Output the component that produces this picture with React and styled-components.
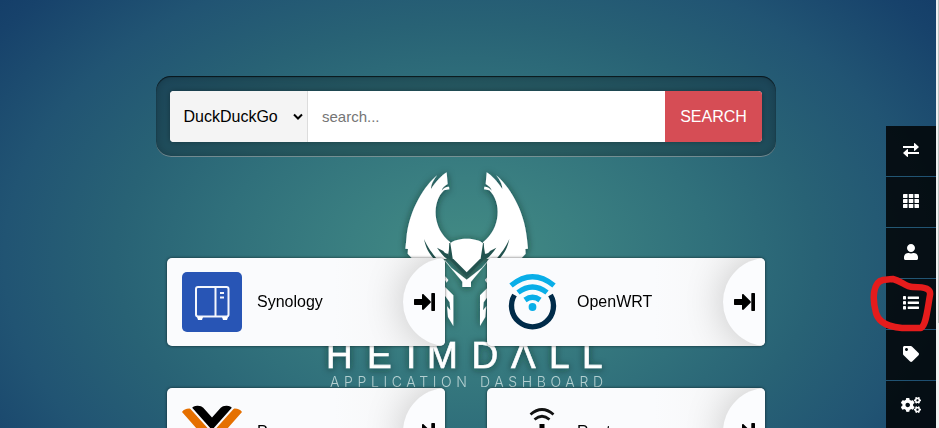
import React from "react";
import styled, { createGlobalStyle } from "styled-components";
import { FaUser, FaTag, FaCogs } from "react-icons/fa";

const Global = createGlobalStyle`
  *{box-sizing:border-box}
  body{margin:0;overflow:hidden;font-family:"Liberation Sans",Arial,sans-serif;font-size:16px;color:#000}
`;
const Page = styled.div`
  width:939px;height:428px;overflow:hidden;display:grid;grid-template-columns:936px 3px;
  background:radial-gradient(700px 470px at 466px 258px,#438c84 0,#3a7f81 17%,#30707b 35%,#286275 50%,#215473 66%,#17426b 82%,#113865 95%);
`;
const Stage = styled.div`display:grid;grid-template:428px / 936px;& > *{grid-area:1/1}`;
const Backdrop = styled.svg`width:936px;height:428px;`;
const Main = styled.main`display:flex;flex-direction:column;align-items:center;padding:76px 4px 0 0;height:428px;overflow:hidden;z-index:1`;
const SearchBox = styled.form`
  display:flex;width:620px;height:81px;flex:none;padding:15px 14px;border-radius:15px;
  background:rgba(0,0,0,.23);border:0;
  box-shadow:inset 0 1px 1px rgba(0,0,0,.7),inset 0 0 8px rgba(0,0,0,.22),inset 0 -1px 0 rgba(255,255,255,.42);
`;
const SearchBar = styled.div`display:flex;width:592px;height:51px;border-radius:4px;overflow:hidden;background:#fff;box-shadow:0 0 5px rgba(0,0,0,.3)`;
const Provider = styled.div`display:flex;align-items:center;justify-content:space-between;width:138px;padding:0 4px 0 13.5px;background:#f4f4f4;border-right:1px solid #dcdcdc`;
const Query = styled.input`flex:1;min-width:0;border:0;outline:0;padding:0 14px 1px;font:15px "Liberation Sans",Arial,sans-serif;&::placeholder{color:#757575}`;
const Submit = styled.button`width:97px;border:0;background:#d64d55;color:#fff;font:16px "Liberation Sans",Arial,sans-serif;padding:0`;
const Tiles = styled.section`display:grid;grid-template-columns:278px 278px;gap:42px;margin-top:101px`;
const Tile = styled.article`
  display:flex;align-items:center;height:88px;padding-left:15px;border-radius:5px;overflow:hidden;
  background:linear-gradient(90deg,#fafbfd 0,#fafbfd 60%,#f5f5f5 100%);box-shadow:0 0 3px rgba(0,0,0,.65);
`;
const Logo = styled.svg`width:60px;height:60px;flex:none`;
const Title = styled.span`flex:1;margin-left:15px;line-height:20px`;
const Launch = styled.div`
  width:88px;height:88px;flex:none;margin-right:-46px;border-radius:50%;background:#fbfcfe;
  box-shadow:0 0 40px rgba(0,0,0,.2);display:flex;align-items:center;padding-left:11px;
`;
const Rail = styled.nav`display:flex;flex-direction:column;gap:1px;width:50px;height:302px;overflow:hidden;justify-self:end;margin-top:126px;z-index:1`;
const RailItem = styled.a`display:flex;flex:none;align-items:center;justify-content:center;height:50px;padding-bottom:2px;background:rgba(0,0,0,.82);color:#fff;font-size:${p => p.$wide ? 20 : 16}px`;
const Marker = styled.svg`width:68px;height:60px;justify-self:end;margin-top:272px;z-index:2;pointer-events:none`;
const Scroll = styled.div`background:#f1f1f1;padding-left:2px;height:428px`;
const Thumb = styled.div`background:#c1c1c1;height:323px`;

const Horn = () => (
  <g>
    <path fill="#fff" d="M126 31C92 60 42 130 34 222L31 251L39 252L38 266L50 279H85L150 282L158 280L166 232C112 190 110 112 147 76L163 73L162 65C151 65 145 71 140 77C141 68 149 63 158 57L155 22C140 31 122 50 108 72C108 57 117 44 126 31Z" />
    <path fill="#24534f" d="M87 222C96 245 113 266 126 282H117C101 264 92 247 87 222ZM126 248L145 258C149 265 155 267 160 266V282H157C145 275 135 260 126 248Z" />
    <path fill="#fff" d="M148 286L202 350V366H216V345L169 308L150 286ZM151 334L160 345L155 353L150 345ZM150 366L175 391V483L159 456L156 424L166 436L164 412L150 392Z" />
  </g>
);

const HeimdallArt = () => (
  <Backdrop viewBox="0 0 936 428">
    <defs>
      <filter id="glow" x="-30%" y="-30%" width="160%" height="160%">
        <feDropShadow dx="0" dy="1" stdDeviation="3.5" floodColor="#08201f" floodOpacity=".65" />
      </filter>
    </defs>
    <g filter="url(#glow)">
      <g transform="translate(395 165) scale(.33333)">
        <Horn />
        <g transform="translate(430 0) scale(-1 1)"><Horn /></g>
        <path fill="#24534f" d="M163 234L160 280L215 336L270 280L266 234Z" />
        <path fill="#fff" d="M166 235C185 217 245 217 264 235L257 280L215 322L173 280Z" />
      </g>
      <text y="368" x="326 367 406 427 471.500 511 549 582" fill="#fff" stroke="#fff" strokeWidth=".6" fontFamily="Liberation Sans" fontSize="37">HEIMDΛLL</text>
    </g>
    <text x="330" y="387" fill="#b3cfd0" fontFamily="Inter" fontWeight="300" fontSize="14" textLength="273">APPLICATION DASHBOARD</text>
  </Backdrop>
);

const Enter = () => (
  <svg width="21" height="18" viewBox="0 0 21 18"><path d="M1 6h7V2.200c0-1.200 1-1.500 1.800-.8l6.500 6.500c.7.7.7 1.500 0 2.200l-6.500 6.500c-.8.7-1.800.4-1.800-.8V12H1c-.7 0-1-.3-1-1V7c0-.7.3-1 1-1ZM18 0h2.300q.7 0 .7.7v16.600q0 .7-.7.7H18q-.7 0-.7-.7V.7q0-.7.7-.7Z" /></svg>
);
const Synology = () => (
  <Logo viewBox="0 0 60 60"><rect width="60" height="60" rx="5" fill="#2855b5" /><g fill="none" stroke="#f4f6fc" strokeWidth="2"><rect x="14" y="15" width="32.5" height="29.5" rx="2" /><path d="M33.5 15v29M38 21h4m-4 4.500h4" /></g><path fill="#fff" d="M15 45h6l-1 3h-4zM40 45h6l-1 3h-4z" /></Logo>
);
const OpenWrt = () => (
  <Logo viewBox="0 0 60 60"><g fill="none" strokeWidth="5.300"><path stroke="#002b49" d="M12.500 23A21 21 0 1 0 48.500 23" /><g stroke="#09aee8"><path d="M9 13.500Q30.500-4 52 13.500" /><path d="M16 20.500Q30.500 9.500 45 20.500" /><path d="M23 28Q30.500 22.500 38 28" /></g></g><circle cx="30.500" cy="35" r="3.900" fill="#09aee8" /></Logo>
);
const Proxmox = () => (
  <Logo viewBox="0 0 60 60"><path fill="#e57000" d="M0 10C2 6 10 5 14 9L30 25L46 9C50 5 58 6 60 10L30 44Z" /><path fill="#000" stroke="#fafbfd" strokeWidth="2" d="M9 6C11 2 19 2 22 5L30 14L38 5C41 2 49 2 51 6L30 29.500Z" /></Logo>
);
const Router = () => (
  <Logo viewBox="0 0 60 60"><g fill="none" stroke="#111" strokeWidth="2.700"><path d="M28.500 12.500Q40 2.500 51.500 12.500M32.500 17.500Q40 11 47.500 17.500" /></g><path d="M37.500 22h5v28h-5z" /></Logo>
);
const tiles = [["Synology", Synology], ["OpenWRT", OpenWrt], ["Proxmox", Proxmox], ["Router", Router]];

const Swap = () => <svg width="16" height="14" viewBox="0 0 16 14" fill="#fff"><path d="M0 3h11V.7q0-1 .9-.4L16 4l-4.100 3.700q-.9.600-.9-.4V5H0zM16 9H5V6.700q0-1-.9-.4L0 10l4.100 3.700q.9.600.9-.4V11h11z" /></svg>;
const Grid = () => <svg width="16" height="14" viewBox="0 0 16 14" fill="#fff">{[0, 5, 10].map(y => [0, 5.800, 11.500].map(x => <rect key={`${x}-${y}`} x={x} y={y} width="4.500" height="4" rx=".4" />))}</svg>;
const List = () => <svg width="16" height="14" viewBox="0 0 16 14" fill="#fff">{[0, 5, 10].map(y => <g key={y}><rect y={y} width="3" height="3.500" rx=".4" /><rect x="4.700" y={y + .5} width="11.300" height="2.500" rx=".4" /></g>)}</svg>;

export default function App() {
  return (
    <>
      <Global />
      <Page>
        <Stage>
          <HeimdallArt />
          <Main>
            <SearchBox>
              <SearchBar>
                <Provider>DuckDuckGo<svg width="10" height="8" viewBox="0 0 10 8"><path d="M1 1.500l4 4 4-4" fill="none" stroke="#000" strokeWidth="2" /></svg></Provider>
                <Query placeholder="search..." />
                <Submit type="button">SEARCH</Submit>
              </SearchBar>
            </SearchBox>
            <Tiles>
              {tiles.map(([name, Art]) => <Tile key={name}><Art /><Title>{name}</Title><Launch><Enter /></Launch></Tile>)}
            </Tiles>
          </Main>
          <Rail>
            {[Swap, Grid, FaUser, List, FaTag, FaCogs].map((Icon, i) => <RailItem key={i} $wide={Icon === FaCogs}><Icon /></RailItem>)}
          </Rail>
          <Marker viewBox="868 272 68 60"><path d="M883 280C873 282 872 298 876 313C879 323 889 327 902 328H921C926 325 927 312 930 295C931 289 926 287 913 287C905 287 902 281 893 279L883 280" fill="none" stroke="#e51c1c" strokeWidth="6.500" strokeLinecap="round" strokeLinejoin="round" /></Marker>
        </Stage>
        <Scroll><Thumb /></Scroll>
      </Page>
    </>
  );
}
